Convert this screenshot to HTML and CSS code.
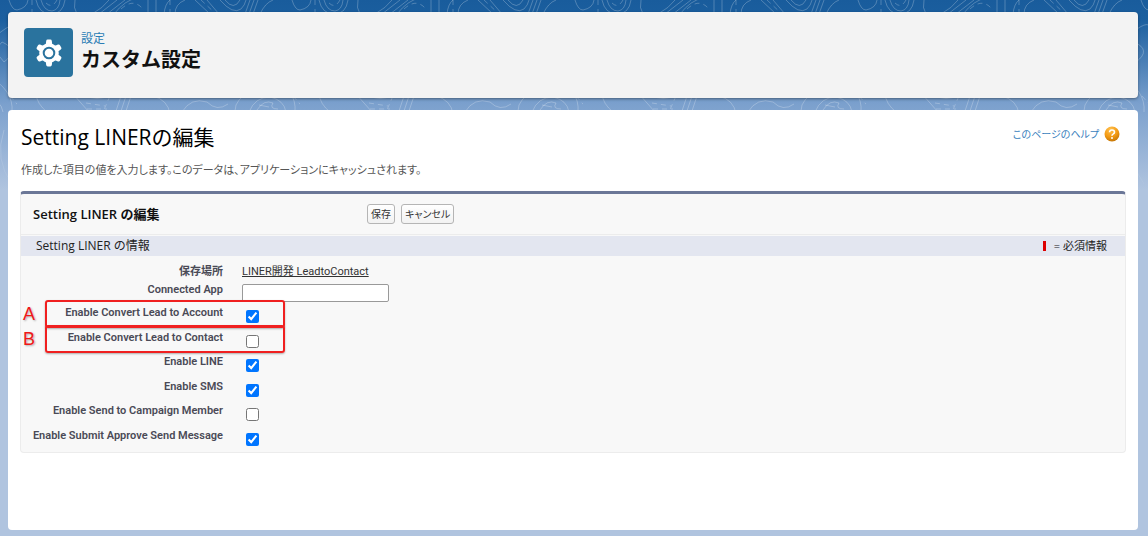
FILE: index.html
```html
<!DOCTYPE html>
<html lang="ja">
<head>
    <meta charset="UTF-8">
    <meta name="viewport" content="width=device-width, initial-scale=1.0">
    <title>カスタム設定</title>
    <link rel="stylesheet" href="styles.css">
</head>
<body>
    <div class="page">
        <svg class="topo" aria-hidden="true">
            <defs>
                <pattern id="contours" x="300" y="0" width="283" height="200" patternUnits="userSpaceOnUse">
                    <g fill="none" stroke="#fff" stroke-opacity=".24">
                        <path d="M0 10Q10 8 11 0M19 0Q22 14 34 14Q46 14 48 0M24 0Q27 11 35 11Q42 10 43 0M58 0Q56 8 60 14M75 14Q86 8 92 0M82 14L100 0M90 14L108 0M97 14Q108 0 120 -2M131 0V14M139 0V14M147 14Q148 4 153 0M158 14Q158 4 168 0M178 0L193 14M190 0L202 14M203 0Q216 15 224 9Q228 5 229 0M208 0Q217 11 223 0M233 0L228 14M237 0L232 14M241 0L236 14M243 14Q248 3 256 0M275 0Q278 10 283 10" />
                        <path stroke-dasharray="5 4" d="M15 0V14M29 3Q35 9 40 0M104 9Q116 -2 125 8M153 14V0M184 0L199 14" />
                        <path d="M19 94Q20 104 30 112M56 94L72 112M65 94Q80 103 96 94M104 96L98 114M109 96L103 114M114 96L108 114M136 96Q151 100 153 114M165 112Q174 97 190 102Q200 112 211 104M170 96Q188 94 197 96M220 114Q214 106 228 94M232 112Q238 97 253 97Q267 100 269 112M240 110Q247 99 256 103Q252 109 261 109M242 105L252 107" />
                        <path stroke-dasharray="5 4" d="M69 103L88 106M70 109H90M93 96L86 112M276 96L290 112" />
                        <path d="M0 25Q14 34 4 55T8 90M132 24Q142 36 135 60M257 40Q280 20 283 26M268 42Q258 50 270 62Q286 50 268 42M253 75Q280 90 278 112M0 130Q12 150 5 190M270 130Q260 160 278 184" />
                    </g>
                </pattern>
                <linearGradient id="fade" x2="0" y2="1">
                    <stop offset="0" stop-color="#fff" />
                    <stop offset=".6" stop-color="#fff" />
                    <stop offset="1" stop-color="#000" />
                </linearGradient>
                <mask id="fade-mask"><rect width="100%" height="100%" fill="url(#fade)" /></mask>
            </defs>
            <rect width="100%" height="100%" fill="url(#contours)" mask="url(#fade-mask)" />
        </svg>

        <header class="page-header">
            <div class="header-icon">
                <svg viewBox="0 0 28 28" width="28" height="28" aria-hidden="true">
                    <g fill="#fff">
                        <path id="tooth" d="M11.200 2Q11.400.6 12.700.6H15.300Q16.600.6 16.800 2L17.400 7H10.600Z" />
                        <use href="#tooth" transform="rotate(60 14 14)" />
                        <use href="#tooth" transform="rotate(120 14 14)" />
                        <use href="#tooth" transform="rotate(180 14 14)" />
                        <use href="#tooth" transform="rotate(240 14 14)" />
                        <use href="#tooth" transform="rotate(300 14 14)" />
                        <circle cx="14" cy="14" r="9.800" />
                    </g>
                    <circle cx="14" cy="14" r="5.300" fill="#fff" stroke="#2a739e" stroke-width="2" />
                </svg>
            </div>
            <div>
                <p class="header-sub">設定</p>
                <h1 class="header-title">カスタム設定</h1>
            </div>
        </header>

        <main class="content">
            <div class="title-row">
                <h2 class="title">Setting LINERの編集</h2>
                <a class="help" href="#">このページのヘルプ
                    <svg viewBox="0 0 16 16" width="16" height="16" aria-hidden="true">
                        <defs>
                            <radialGradient id="orange" cx=".4" cy=".2" r=".8">
                                <stop offset="0" stop-color="#ffc04d" />
                                <stop offset=".6" stop-color="#f39a14" />
                                <stop offset="1" stop-color="#c77807" />
                            </radialGradient>
                        </defs>
                        <circle cx="8" cy="8" r="7.500" fill="url(#orange)" />
                        <path d="M5.500 6.200Q5.700 4 8 4Q10.500 4 10.500 6.200Q10.500 7.300 9 8.100Q8 8.600 8 9.700" fill="none" stroke="#fff" stroke-width="1.600" />
                        <circle cx="8" cy="12" r="1" fill="#fff" />
                    </svg>
                </a>
            </div>
            <p class="description">作成した項目の値を入力します。このデータは、アプリケーションにキャッシュされます。</p>

            <form class="panel">
                <div class="panel-head">
                    <h3 class="panel-title">Setting LINER の編集</h3>
                    <button type="button">保存</button>
                    <button type="button">キャンセル</button>
                </div>
                <div class="section-head">
                    <h4 class="section-title">Setting LINER の情報</h4>
                    <span class="required"><span class="required-mark"></span>= 必須情報</span>
                </div>
                <div class="fields">
                    <div class="field">
                        <span class="label">保存場所</span>
                        <a class="location" href="#">LINER開発 LeadtoContact</a>
                    </div>
                    <div class="field">
                        <label class="label" for="app">Connected App</label>
                        <input class="text-input" type="text" id="app">
                    </div>
                </div>
                <div class="checks">
                    <div class="field marked">
                        <label class="label" for="account">Enable Convert Lead to Account</label>
                        <input type="checkbox" id="account" checked>
                        <span class="marker">A</span>
                    </div>
                    <div class="field marked">
                        <label class="label" for="contact">Enable Convert Lead to Contact</label>
                        <input type="checkbox" id="contact">
                        <span class="marker">B</span>
                    </div>
                    <div class="field">
                        <label class="label" for="line">Enable LINE</label>
                        <input type="checkbox" id="line" checked>
                    </div>
                    <div class="field">
                        <label class="label" for="sms">Enable SMS</label>
                        <input type="checkbox" id="sms" checked>
                    </div>
                    <div class="field">
                        <label class="label" for="campaign">Enable Send to Campaign Member</label>
                        <input type="checkbox" id="campaign">
                    </div>
                    <div class="field">
                        <label class="label" for="approve">Enable Submit Approve Send Message</label>
                        <input type="checkbox" id="approve" checked>
                    </div>
                </div>
            </form>
        </main>
    </div>
</body>
</html>
```

FILE: styles.css
```css
* {
    box-sizing: border-box;
}

body {
    margin: 0;
    background: #fff;
    font-family: "Open Sans", "Noto Sans CJK JP", sans-serif;
    font-size: 11px;
    line-height: 16px;
    color: #222;
}

h1, h2, h3, h4, p {
    margin: 0;
}

.page {
    position: relative;
    display: flex;
    flex-direction: column;
    gap: 12px;
    min-height: calc(100vh - 1px);
    padding: 12px 10px 6px 8px;
    background: linear-gradient(#195c9c 0, #1b5f9f 20px, #7ba0cd 104px, #b0c4df 190px);
}

.topo {
    position: absolute;
    top: 0;
    left: 0;
    width: 100%;
    height: 200px;
}

.page-header {
    position: relative;
    display: flex;
    gap: 8px;
    padding: 16px 16px 21px;
    border-radius: 4px;
    background: #f3f3f3;
    box-shadow: 0 1px 3px rgba(0, 0, 0, 0.4);
}

.header-icon {
    display: flex;
    align-items: center;
    justify-content: center;
    width: 49px;
    height: 49px;
    border-radius: 4px;
    background: #2a739e;
}

.header-sub {
    padding-top: 3px;
    font-size: 12px;
    color: #2a7db5;
}

.header-title {
    font-size: 20px;
    line-height: 26px;
    color: #111;
}

.content {
    position: relative;
    flex: 1;
    padding: 12px 12px 0;
    border-radius: 4px;
    background: #fff;
}

.title-row {
    display: flex;
    justify-content: space-between;
    padding: 0 6px 0 1px;
}

.title {
    font-size: 21px;
    font-weight: normal;
    line-height: 30px;
    color: #000;
}

.help {
    display: flex;
    gap: 5px;
    align-items: center;
    height: 24px;
    font-size: 10px;
    color: #3a7fbd;
    text-decoration: none;
}

/* proportional kana */
.help, .description, button {
    font-feature-settings: "palt";
}

.description {
    padding: 10px 1px 13px;
    color: #555;
}

.panel {
    border: 1px solid #ececec;
    border-top: 3px solid #6b7797;
    border-radius: 4px;
    background: #f8f8f8;
}

.panel-head {
    display: flex;
    gap: 6px;
    align-items: center;
    height: 41px;
    padding-left: 12px;
    border-bottom: 1px solid #ececec;
}

.panel-title {
    width: 328px;
    font-size: 13px;
    font-weight: 600;
    color: #111;
}

button {
    height: 20px;
    padding: 0 3px;
    border: 1px solid #b5b5b5;
    border-radius: 3px;
    background: linear-gradient(#fff, #f2f2f2);
    font-family: inherit;
    font-size: 10px;
    line-height: 16px;
    color: #333;
}

.section-head {
    display: flex;
    align-items: center;
    justify-content: space-between;
    height: 20px;
    margin-top: 1px;
    padding: 0 18px 0 15px;
    background: #e3e6f0;
}

.section-title {
    font-size: 12px;
    font-weight: normal;
}

.required {
    display: flex;
    gap: 8px;
    align-items: center;
}

.required-mark {
    width: 3px;
    height: 10px;
    background: #d00;
}

.fields {
    padding-top: 8px;
}

.field {
    position: relative;
    display: flex;
    gap: 19px;
}

.fields .field {
    height: 18px;
}

.checks {
    display: grid;
    grid-auto-rows: 1fr;
    height: 152px;
    padding-bottom: 5px;
}

.label {
    width: 202px;
    font-family: Roboto, "Noto Sans CJK JP", sans-serif;
    font-weight: 600;
    text-align: right;
    color: #4a4a56;
    white-space: nowrap;
}

.location {
    font-family: Roboto, "Noto Sans CJK JP", sans-serif;
    color: #333;
}

.text-input {
    width: 147px;
    height: 18px;
    margin-top: 2px;
    border: 1px solid #999;
    border-radius: 2px;
    background: #fff;
}

input[type="checkbox"] {
    width: 13px;
    height: 13px;
    margin: 10px 0 0 4px;
}

.checks .label {
    padding-top: 5px;
}

/* red callouts around the highlighted rows */
.marked::after {
    content: "";
    position: absolute;
    top: 0;
    left: 24px;
    width: 236px;
    height: 24px;
    border: 2px solid #f02020;
    border-radius: 3px;
    box-shadow: 0 1px 2px rgba(0, 0, 0, 0.3);
    pointer-events: none;
}

.marker {
    position: absolute;
    top: 4px;
    left: 2px;
    font-family: "Liberation Sans", sans-serif;
    font-size: 18px;
    line-height: 20px;
    color: #f01818;
    text-shadow: 1px 1px 2px rgba(0, 0, 0, 0.3);
}
```
